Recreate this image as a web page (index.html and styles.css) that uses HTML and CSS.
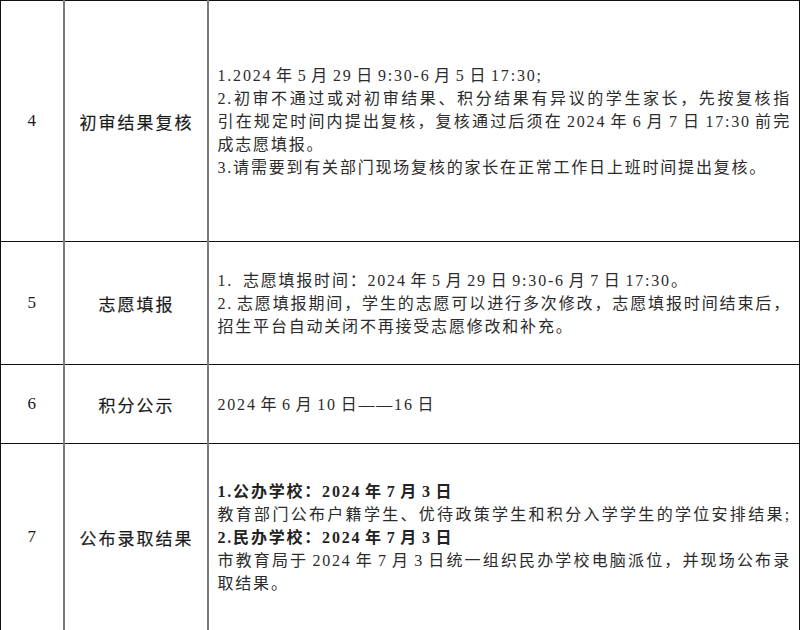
FILE: index.html
```html
<!DOCTYPE html>
<html lang="zh-CN">
<head>
<meta charset="utf-8">
<title>招生工作时间安排</title>
<link rel="stylesheet" href="styles.css">
</head>
<body>
<table class="schedule">
  <colgroup>
    <col class="col-no">
    <col class="col-stage">
    <col class="col-desc">
  </colgroup>
  <tbody>
    <tr class="row-review">
      <td class="no">4</td>
      <td class="stage">初审结果复核</td>
      <td class="desc">
        <p class="ln">1.2024 年 5 月 29 日 9:30-6 月 5 日 17:30;</p>
        <p class="ln just">2.初审不通过或对初审结果、积分结果有异议的学生家长，先按复核指</p>
        <p class="ln just">引在规定时间内提出复核，复核通过后须在 2024 年 6 月 7 日 17:30 前完</p>
        <p class="ln">成志愿填报。</p>
        <p class="ln">3.请需要到有关部门现场复核的家长在正常工作日上班时间提出复核。</p>
      </td>
    </tr>
    <tr class="row-wish">
      <td class="no">5</td>
      <td class="stage">志愿填报</td>
      <td class="desc">
        <p class="ln">1.&ensp;志愿填报时间：2024 年 5 月 29 日 9:30-6 月 7 日 17:30。</p>
        <p class="ln just">2. 志愿填报期间，学生的志愿可以进行多次修改，志愿填报时间结束后，</p>
        <p class="ln">招生平台自动关闭不再接受志愿修改和补充。</p>
      </td>
    </tr>
    <tr class="row-points">
      <td class="no">6</td>
      <td class="stage">积分公示</td>
      <td class="desc">
        <p class="ln">2024 年 6 月 10 日——16 日</p>
      </td>
    </tr>
    <tr class="row-result">
      <td class="no">7</td>
      <td class="stage">公布录取结果</td>
      <td class="desc">
        <p class="ln strong">1.公办学校：2024 年 7 月 3 日</p>
        <p class="ln just">教育部门公布户籍学生、优待政策学生和积分入学学生的学位安排结果;</p>
        <p class="ln strong">2.民办学校：2024 年 7 月 3 日</p>
        <p class="ln just">市教育局于 2024 年 7 月 3 日统一组织民办学校电脑派位，并现场公布录</p>
        <p class="ln">取结果。</p>
      </td>
    </tr>
  </tbody>
</table>
</body>
</html>
```

FILE: styles.css
```css
html, body {
  margin: 0;
  padding: 0;
  background: #fff;
}

.schedule {
  border-collapse: collapse;
  table-layout: fixed;
  width: 799px;
}

.col-no { width: 63px; }
.col-stage { width: 144px; }
.col-desc { width: 592px; }

.schedule td {
  border: 1px solid #111;
  vertical-align: middle;
  padding: 0;
}

.schedule td.no,
.schedule td.stage {
  border-right: 2px solid #7a7a7a;
}

.row-review { height: 241px; }
.row-wish { height: 123px; }
.row-points { height: 79px; }
.row-result { height: 187px; }

.no {
  text-align: center;
  font-family: "Liberation Serif", serif;
  font-size: 17px;
  color: #1a1a1a;
}

.stage {
  text-align: center;
  font-family: "Noto Sans CJK SC", sans-serif;
  font-size: 17px;
  letter-spacing: 2px;
  padding-left: 2px !important;
  color: #1a1a1a;
  -webkit-text-stroke: 0.18px #1a1a1a;
}

.desc {
  padding: 0 6px 0 9px !important;
  font-family: "Liberation Serif", "Noto Sans CJK SC", serif;
  font-size: 16px;
  letter-spacing: 1.8px;
  word-spacing: -2px;
  line-height: 23px;
  color: #2b2b2b;
}

.ln {
  margin: 0;
}

.just {
  text-align: justify;
  text-align-last: justify;
  margin-right: 2px;
}

.strong {
  font-weight: 700;
  color: #222;
}
```
